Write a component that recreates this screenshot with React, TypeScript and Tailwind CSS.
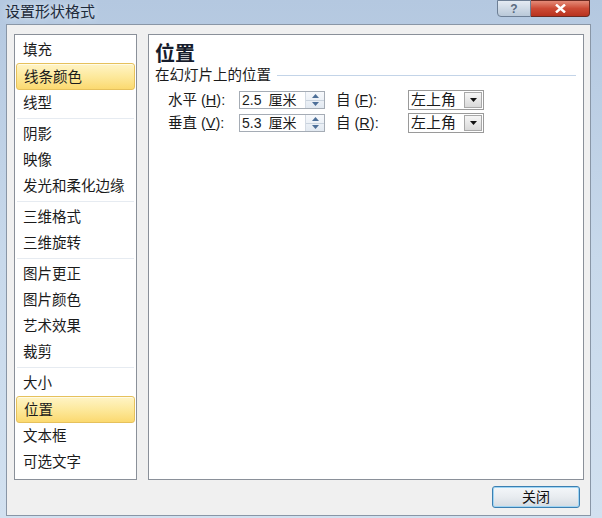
import React from 'react';

const GROUPS: string[][] = [
  ['填充', '线条颜色', '线型'],
  ['阴影', '映像', '发光和柔化边缘'],
  ['三维格式', '三维旋转'],
  ['图片更正', '图片颜色', '艺术效果', '裁剪'],
  ['大小', '位置', '文本框', '可选文字'],
];

const HIGHLIGHTED = new Set(['线条颜色', '位置']);

function NavItem({ label }: { label: string }) {
  if (HIGHLIGHTED.has(label)) {
    return (
      <div className="mx-px flex h-[27px] items-center rounded-[3px] border border-[#e6c15c] bg-gradient-to-b from-[#fff4c6] via-[#fde99c] to-[#fbd96f] pl-[7px] shadow-[inset_0_1px_0_#fffbe6]">
        {label}
      </div>
    );
  }
  return <div className="flex h-[26px] items-center pl-[8px]">{label}</div>;
}

function Spinner() {
  return (
    <div className="flex h-full w-[19px] flex-col border-l border-[#d3dae3] bg-gradient-to-b from-[#f7f9fc] to-[#e2e9f1]">
      <div className="flex flex-1 items-center justify-center border-b border-[#c9d3de]">
        <svg width="7" height="4" viewBox="0 0 7 4">
          <path d="M0 4 L3.5 0 L7 4Z" fill="#4d6f98" />
        </svg>
      </div>
      <div className="flex flex-1 items-center justify-center">
        <svg width="7" height="4" viewBox="0 0 7 4">
          <path d="M0 0 L3.5 4 L7 0Z" fill="#4d6f98" />
        </svg>
      </div>
    </div>
  );
}

function PositionRow({
  label,
  hotkey,
  value,
  fromKey,
}: {
  label: string;
  hotkey: string;
  value: string;
  fromKey: string;
}) {
  return (
    <div className="flex h-[20px] items-center pl-[13px]">
      <div className="w-[71px] whitespace-nowrap">
        {label} (<span className="underline">{hotkey}</span>):
      </div>
      <div className="flex h-[18px] w-[86px] items-stretch border border-[#a5acb5] bg-white">
        <div className="flex flex-1 items-center pl-[2px] text-[14px]">
          {value.split(' ')[0]}
          <span className="ml-[7px]">{value.split(' ')[1]}</span>
        </div>
        <Spinner />
      </div>
      <div className="ml-[11px] w-[72px] whitespace-nowrap">
        自 (<span className="underline">{fromKey}</span>):
      </div>
      <div className="flex h-[20px] w-[76px] items-stretch border border-[#9a9a9a] bg-white">
        <div className="flex flex-1 items-center pl-[2px] text-[15px]">左上角</div>
        <div className="m-px flex w-[18px] items-center justify-center border border-[#a8a8a8] bg-gradient-to-b from-[#f6f6f6] to-[#d9d9d9]">
          <svg width="7" height="4" viewBox="0 0 7 4">
            <path d="M0 0 L7 0 L3.5 4Z" fill="#111" />
          </svg>
        </div>
      </div>
    </div>
  );
}

export default function App() {
  return (
    <div className="h-[518px] w-[602px] overflow-hidden bg-gradient-to-b from-[#b4c8e0] via-[#c8d9eb] to-[#d2e1f0] font-['Liberation_Sans','Noto_Sans_CJK_SC',sans-serif] text-[14.5px] leading-[18px] text-[#1b1b1b]">
      {/* title bar */}
      <div className="flex h-[24px] items-start">
        <div className="pl-[5px] pt-[3px] text-[15px] leading-[18px] text-[#1d2a3a] [text-shadow:0_0_6px_#e8f0f8]">
          设置形状格式
        </div>
        <div className="ml-auto mr-[12px] flex h-[17px]">
          <div className="flex w-[34px] items-center justify-center rounded-bl-[4px] border border-[#6d7f95] bg-gradient-to-b from-[#e4ebf3] to-[#b9c8d8] text-[12px] font-bold leading-none text-[#5a6b80]">
            ?
          </div>
          <div className="flex w-[59px] items-center justify-center rounded-br-[4px] border border-l-0 border-[#6b2a22] bg-gradient-to-b from-[#e48a77] via-[#cc4a35] to-[#b8321f]">
            <svg width="11" height="9" viewBox="0 0 11 9">
              <path d="M1 0.5 L10 8.5 M10 0.5 L1 8.5" stroke="#fff" strokeWidth="2.4" />
            </svg>
          </div>
        </div>
      </div>

      {/* client area */}
      <div className="ml-[6px] flex h-[492px] w-[585px] flex-col border border-[#8996a6] bg-[#f0f0f0] pl-[7px] pr-[6px] pt-[9px]">
        <div className="flex gap-[11px]">
          <div className="h-[446px] w-[123px] border border-[#8a9099] bg-white pt-[2px]">
            {GROUPS.map((group, gi) => (
              <div key={gi}>
                {gi > 0 && <div className="mx-[2px] my-[2px] h-px bg-[#e6ebf1]" />}
                {group.map((label) => (
                  <NavItem key={label} label={label} />
                ))}
              </div>
            ))}
          </div>

          <div className="h-[446px] flex-1 border border-[#8a9099] bg-white pl-[6px] pt-[7px]">
            <div className="text-[20px] font-bold leading-[24px] text-[#161c2c]">位置</div>
            <div className="flex items-center">
              <span>在幻灯片上的位置</span>
              <div className="ml-[6px] mr-[7px] h-px flex-1 bg-[#c3d4e8]" />
            </div>
            <div className="mt-[6px] flex flex-col gap-[3px]">
              <PositionRow label="水平" hotkey="H" value="2.5 厘米" fromKey="F" />
              <PositionRow label="垂直" hotkey="V" value="5.3 厘米" fromKey="R" />
            </div>
          </div>
        </div>

        <div className="mr-[4px] mt-[6px] flex justify-end">
          <button className="flex h-[22px] w-[88px] items-center justify-center rounded-[3px] border border-[#3c7fb1] bg-gradient-to-b from-[#f4f7fa] via-[#e8ecf0] to-[#d4dbe2] text-[14px] leading-none text-[#111] shadow-[inset_0_0_0_1px_#9fd5f4]">
            关闭
          </button>
        </div>
      </div>
    </div>
  );
}
